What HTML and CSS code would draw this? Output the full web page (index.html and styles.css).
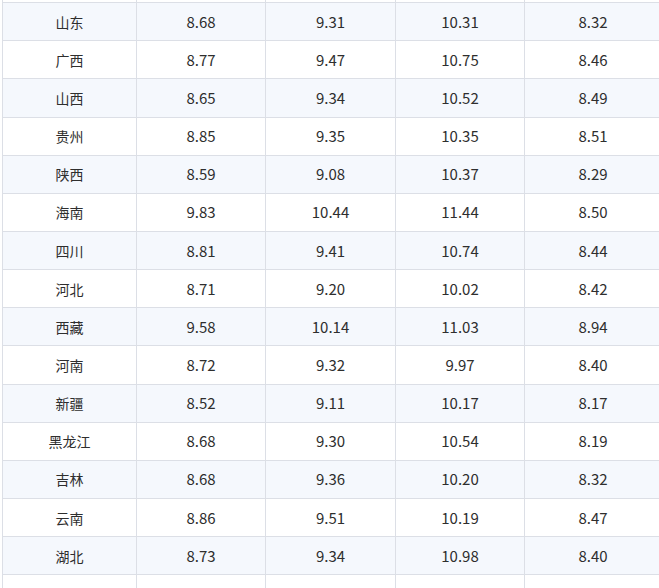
FILE: index.html
```html
<!DOCTYPE html>
<html lang="zh-CN">
<head>
<meta charset="utf-8">
<title>油价表</title>
<link rel="stylesheet" href="styles.css">
</head>
<body>
<div class="viewport">
<table class="price-table">
<colgroup>
<col class="c1"><col class="c2"><col class="c3"><col class="c4"><col class="c5">
</colgroup>
<tbody>
<tr class="even"><td class="name">&nbsp;</td><td>&nbsp;</td><td>&nbsp;</td><td>&nbsp;</td><td>&nbsp;</td></tr>
<tr class="odd"><td class="name">山东</td><td>8.68</td><td>9.31</td><td>10.31</td><td>8.32</td></tr>
<tr class="even"><td class="name">广西</td><td>8.77</td><td>9.47</td><td>10.75</td><td>8.46</td></tr>
<tr class="odd"><td class="name">山西</td><td>8.65</td><td>9.34</td><td>10.52</td><td>8.49</td></tr>
<tr class="even"><td class="name">贵州</td><td>8.85</td><td>9.35</td><td>10.35</td><td>8.51</td></tr>
<tr class="odd"><td class="name">陕西</td><td>8.59</td><td>9.08</td><td>10.37</td><td>8.29</td></tr>
<tr class="even"><td class="name">海南</td><td>9.83</td><td>10.44</td><td>11.44</td><td>8.50</td></tr>
<tr class="odd"><td class="name">四川</td><td>8.81</td><td>9.41</td><td>10.74</td><td>8.44</td></tr>
<tr class="even"><td class="name">河北</td><td>8.71</td><td>9.20</td><td>10.02</td><td>8.42</td></tr>
<tr class="odd"><td class="name">西藏</td><td>9.58</td><td>10.14</td><td>11.03</td><td>8.94</td></tr>
<tr class="even"><td class="name">河南</td><td>8.72</td><td>9.32</td><td>9.97</td><td>8.40</td></tr>
<tr class="odd"><td class="name">新疆</td><td>8.52</td><td>9.11</td><td>10.17</td><td>8.17</td></tr>
<tr class="even"><td class="name">黑龙江</td><td>8.68</td><td>9.30</td><td>10.54</td><td>8.19</td></tr>
<tr class="odd"><td class="name">吉林</td><td>8.68</td><td>9.36</td><td>10.20</td><td>8.32</td></tr>
<tr class="even"><td class="name">云南</td><td>8.86</td><td>9.51</td><td>10.19</td><td>8.47</td></tr>
<tr class="odd"><td class="name">湖北</td><td>8.73</td><td>9.34</td><td>10.98</td><td>8.40</td></tr>
<tr class="even faded"><td class="name">重庆</td><td>8.74</td><td>9.35</td><td>10.36</td><td>8.41</td></tr>
</tbody>
</table>
</div>
</body>
</html>
```
FILE: styles.css
```css
html, body {
  margin: 0;
  padding: 0;
  background: #ffffff;
}
.viewport {
  width: 659px;
  height: 588px;
  overflow: hidden;
  padding-left: 2px;
  box-sizing: border-box;
}
.price-table {
  border-collapse: collapse;
  table-layout: fixed;
  width: 659px;
  margin-top: -36px;
  font-family: "Noto Sans CJK SC", "Noto Sans", sans-serif;
  color: #2e2e2e;
}
.c1 { width: 134px; }
.c2 { width: 129px; }
.c3 { width: 130px; }
.c4 { width: 129px; }
.c5 { width: 137px; }
.price-table td {
  border: 1px solid #dcdfe6;
  height: 38.15px;
  padding: 0;
  text-align: center;
  vertical-align: middle;
  font-size: 15px;
  line-height: 20px;
  box-sizing: border-box;
}
.price-table td.name {
  font-size: 14px;
}
.odd td { background: #f5f8fd; }
.even td { background: #ffffff; }
.faded td { color: #eceef1; }
```
